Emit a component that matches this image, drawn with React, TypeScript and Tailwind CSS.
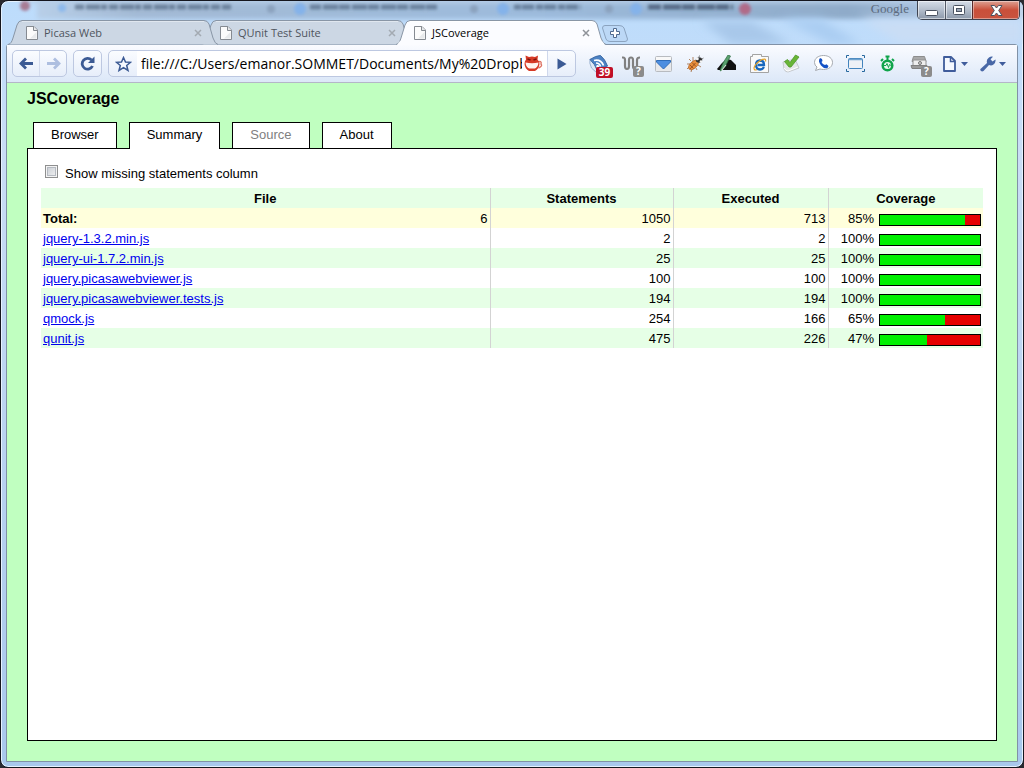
import { useState, type ReactNode } from "react";

type Row = { file: string; statements: number; executed: number; coverage: number };

const rows: Row[] = [
  { file: "jquery-1.3.2.min.js", statements: 2, executed: 2, coverage: 100 },
  { file: "jquery-ui-1.7.2.min.js", statements: 25, executed: 25, coverage: 100 },
  { file: "jquery.picasawebviewer.js", statements: 100, executed: 100, coverage: 100 },
  { file: "jquery.picasawebviewer.tests.js", statements: 194, executed: 194, coverage: 100 },
  { file: "qmock.js", statements: 254, executed: 166, coverage: 65 },
  { file: "qunit.js", statements: 475, executed: 226, coverage: 47 },
];

function PageIcon() {
  return (
    <svg className="h-[14px] w-[12px] shrink-0" viewBox="0 0 12 14" aria-hidden="true">
      <path d="M.5 .5H8L11.5 4V13.5H.5Z" fill="#fbfbfb" stroke="#858a91" />
      <path d="M7.5 .5V4.5H11.5" fill="#e6e8ea" stroke="#858a91" />
      <path d="M4 12.5 10.5 6V12.5Z" fill="#e8eaec" />
    </svg>
  );
}

function BrowserTab({ title, active = false }: { title: string; active?: boolean }) {
  return (
    <div className={active ? "relative z-20 -ml-4 flex h-[25px] w-[210px] items-center pr-[14px] pl-[18px] first:ml-0" : "relative -ml-4 flex h-[25px] w-[210px] items-center pr-[14px] pl-[18px] first:z-10 first:ml-0"}>
      <svg className="absolute inset-0 h-full w-full" viewBox="0 0 210 25" preserveAspectRatio="none" aria-hidden="true">
        <path
          d="M0 24.5C3 24 4 21 5 18L9 5Q10.5 .5 14 .5H196Q199.5 .5 201 4L205 18Q207 24 210 24.5"
          fill={active ? "#fbfcff" : "#ccd7e4"}
          stroke="#8996a6"
        />
        <path d="M14 1.5H196" stroke="#fff" strokeOpacity={active ? 1 : 0.4} />
        {active && <path d="M1 25H209L206 21H4Z" fill="#fbfcff" />}
      </svg>
      <button type="button" className="relative flex min-w-0 flex-1 items-center gap-[6px] text-left">
        <PageIcon />
        <span className={active ? "text-black" : "text-[#4f555e]"}>{title}</span>
      </button>
      <button type="button" aria-label={"Close " + title} className="relative flex h-3 w-3 items-center justify-center">
        <svg className="h-[8px] w-[8px]" viewBox="0 0 8 8" aria-hidden="true">
          <path d="M1 1 7 7M7 1 1 7" stroke={active ? "#8f9399" : "#a3aab2"} strokeWidth="1.5" />
        </svg>
      </button>
    </div>
  );
}

function WindowControls() {
  return (
    <div className="-mr-0.5 flex h-[19px] overflow-hidden rounded-b-[5px] border border-t-0 border-[#3d4350]">
      <button type="button" aria-label="Minimize" className="flex w-7 items-center justify-center border-r border-[#525a67] bg-linear-to-b from-[#d5dde8] via-[#b6c0ce] via-45% to-[#8d99aa] shadow-[inset_0_0_0_1px_#ffffff88]">
        <svg className="mt-[5px] h-[6px] w-[13px]" viewBox="0 0 13 6" aria-hidden="true"><rect x=".5" y=".5" width="12" height="5" rx="1" fill="#fff" stroke="#4b5361" /></svg>
      </button>
      <button type="button" aria-label="Maximize" className="flex w-[26px] items-center justify-center bg-linear-to-b from-[#d5dde8] via-[#b6c0ce] via-45% to-[#8d99aa] shadow-[inset_0_0_0_1px_#ffffff88]">
        <svg className="h-[10px] w-[12px]" viewBox="0 0 12 10" aria-hidden="true">
          <rect x=".5" y=".5" width="11" height="9" rx="1" fill="#fff" stroke="#4b5361" />
          <rect x="3.5" y="3.5" width="5" height="3" fill="#9ca7b7" stroke="#4b5361" />
        </svg>
      </button>
      <button type="button" aria-label="Close window" className="flex w-[47px] items-center justify-center border-l border-[#5b2a2a] bg-linear-to-b from-[#dba093] via-[#c94f3a] via-50% to-[#c8543f] shadow-[inset_0_0_0_1px_#ffffff66]">
        <svg className="h-[11px] w-[13px]" viewBox="0 0 13 11" aria-hidden="true">
          <path d="M1 .5H4.5L6.5 3 8.5 .5H12L8.7 5.5 12 10.5H8.5L6.5 8 4.5 10.5H1L4.3 5.5Z" fill="#fff" stroke="#4b5361" />
        </svg>
      </button>
    </div>
  );
}

function Backdrop() {
  return (
    <svg className="absolute inset-x-0 top-0 h-[43px] w-full rounded-t-[6px]" viewBox="0 0 1022 43" preserveAspectRatio="none" aria-hidden="true">
      <defs>
        <filter id="haze" filterUnits="userSpaceOnUse" x="-20" y="-20" width="1070" height="90"><feGaussianBlur stdDeviation="2.5" /></filter>
        <filter id="smudge" filterUnits="userSpaceOnUse" x="-20" y="-20" width="1070" height="90"><feGaussianBlur stdDeviation="1.8" /></filter>
        <filter id="softHaze" filterUnits="userSpaceOnUse" x="-20" y="-20" width="1070" height="90"><feGaussianBlur stdDeviation="5" /></filter>
        <linearGradient id="band" x1="0" x2="1" y1="0" y2="0">
          <stop offset="0" stopColor="#b8cfe8" /><stop offset=".1" stopColor="#a3bad5" /><stop offset=".5" stopColor="#9dbbdc" />
          <stop offset=".82" stopColor="#8fabc9" /><stop offset=".9" stopColor="#a9c2df" /><stop offset="1" stopColor="#c2d4ea" />
        </linearGradient>
      </defs>
      <g filter="url(#haze)">
        <rect x="36" y="-4" width="990" height="22" fill="url(#band)" />
        <path d="M20 -3H1022V2H20Z" fill="#b8cfe8" />
      </g>
      <g filter="url(#softHaze)">
        <path d="M750 20 790 43H730L700 20Z" fill="#a8c8ea" />
        <path d="M860 18 900 43H1022V18Z" fill="#c9ddf5" />
        <path d="M820 18 860 43H830L780 18Z" fill="#aacdf2" />
      </g>
      <g filter="url(#smudge)" stroke="#465a75" strokeOpacity=".6" strokeWidth="5" fill="none">
        <path d="M74 6H230" strokeDasharray="9 2 14 1 6 2" />
        <path d="M309 6H438" strokeDasharray="11 2 15 1" />
        <path d="M513 6H580" strokeDasharray="7 1 12 2" />
        <path d="M647 6H732" stroke="#26364e" strokeDasharray="13 2 18 1" />
      </g>
      <g filter="url(#smudge)">
        <circle cx="24" cy="5" r="5" fill="#a77b94" /><circle cx="744" cy="8" r="6" fill="#b06a88" />
        <circle cx="61" cy="7" r="4" fill="#8db9ec" /><circle cx="299" cy="8" r="6" fill="#84b2ea" />
        <circle cx="502" cy="8" r="6" fill="#84b2ea" /><circle cx="635" cy="8" r="6" fill="#84b2ea" />
        <circle cx="270" cy="8" r="4" fill="#8ba2be" /><circle cx="473" cy="8" r="4" fill="#8ba2be" /><circle cx="608" cy="8" r="4" fill="#8ba2be" />
      </g>
    </svg>
  );
}

function Tool({ label, children }: { label: string; children: ReactNode }) {
  return (
    <button type="button" aria-label={label} className="flex h-7 w-8 shrink-0 items-center justify-center">
      {children}
    </button>
  );
}

function Badge({ children, red = false }: { children: ReactNode; red?: boolean }) {
  return (
    <span className={red
      ? "absolute -right-[4px] -bottom-[4px] flex h-[11px] w-[17px] items-center justify-center rounded-[2px] bg-[#c00f26] text-[10px] leading-none font-bold text-white"
      : "absolute -right-[4px] -bottom-[4px] flex h-[11px] w-[11px] items-center justify-center rounded-[2px] bg-[#8b8b8b] text-[10px] leading-none font-bold text-white"}>
      {children}
    </span>
  );
}

function Extensions() {
  return (
    <div className="flex items-center pl-[7px]">
      <Tool label="Feed reader, 39 unread">
        <span className="relative flex h-5 w-5">
          <svg className="h-5 w-5" viewBox="0 0 20 20" aria-hidden="true">
            <path d="M1 5Q0 9 2.500 14L8 19 18 14V12Z" fill="#dfe9f6" stroke="#7b9ac2" strokeWidth=".7" />
            <path d="M1 5.500Q7 1.500 11.500 1.500 16 5 18.500 12 13 13 8.500 17 6 10 1 5.500Z" fill="#4c82c4" stroke="#3d6aa5" strokeLinejoin="round" />
            <path d="M5 6.500Q12 5 14.500 11.500M7 9Q10.500 9 11.500 12.500" fill="none" stroke="#fff" strokeWidth="1.7" />
            <circle cx="8.700" cy="12.500" r="1.400" fill="#fff" />
          </svg>
          <Badge red>39</Badge>
        </span>
      </Tool>
      <Tool label="Waveform extension">
        <span className="relative flex h-[18px] w-[18px]">
          <svg className="h-[18px] w-[18px]" viewBox="0 0 18 18" aria-hidden="true">
            <path d="M0 2.500H1Q3 2.500 3 5V11Q3 14 5 14T7 11V5Q7 2.500 9 2.500T11 5V11Q11 14 13 14T15 11V5Q15 2.500 18 2.500" fill="none" stroke="#808080" strokeWidth="2.200" />
          </svg>
          <Badge>?</Badge>
        </span>
      </Tool>
      <Tool label="Download">
        <svg className="h-[16px] w-[17px]" viewBox="0 0 17 16" aria-hidden="true">
          <rect x=".5" y=".5" width="16" height="15" rx="1" fill="#e8e9eb" stroke="#b8bbc0" />
          <rect x="1" y="1" width="15" height="3" fill="#f8f8f8" />
          <path d="M1.500 4.500H15.500V6L8.500 13 1.500 6Z" fill="#4d8ee0" stroke="#2f6cb8" strokeLinejoin="round" />
        </svg>
      </Tool>
      <Tool label="Firebug">
        <svg className="h-[18px] w-[18px]" viewBox="0 0 18 18" aria-hidden="true">
          <path d="M5 6 3 4M4 9H1M7 6 7 2M12 10 15 12M10 13 11 15M6 14 5 17M3 12 1 14" stroke="#a0683c" strokeWidth=".8" />
          <ellipse cx="7.500" cy="10" rx="6" ry="3.400" transform="rotate(-42 7.500 10)" fill="#e98f3c" stroke="#b5672a" strokeWidth=".7" />
          <path d="M4 10 7.500 13.500M6 7.500 10 11.500M4 14 9.500 8" stroke="#8d461a" strokeWidth=".8" />
          <ellipse cx="13" cy="5" rx="3.200" ry="2.800" fill="#333" />
          <circle cx="11.300" cy="3.800" r="1.500" fill="#f4f4f4" /><circle cx="15" cy="6.500" r="1.300" fill="#f4f4f4" />
          <path d="M13 2 13.500 .5M16 4 17.500 3" stroke="#666" strokeWidth=".8" />
        </svg>
      </Tool>
      <Tool label="Sign">
        <svg className="h-[17px] w-[20px]" viewBox="0 0 20 17" aria-hidden="true">
          <path d="M0 14 5 8 10 4 14 5 19 10V15H1Z" fill="#111" />
          <path d="M11 0 13.500 1 9 10 4 16 3 15.500 6 8Z" fill="#5aa06e" stroke="#2d6b3f" strokeWidth=".7" />
          <path d="M9 10 4.500 15.500" stroke="#dcebdf" strokeWidth="1.100" />
        </svg>
      </Tool>
      <Tool label="IE Tab">
        <svg className="h-[19px] w-[19px]" viewBox="0 0 19 19" aria-hidden="true">
          <path d="M.5 2.500H2.500V.5H11.500V2.500H18.500V18.500H.5Z" fill="#fafafa" stroke="#a3a3a3" />
          <path d="M14 13Q12.500 15.500 10 15.500 6 15.300 6 11T10 6.500Q14 6.500 14 11H7.500" fill="none" stroke="#1767bd" strokeWidth="2.300" />
          <path d="M15.500 7.500Q16.500 3.500 11 6 5 10 4 14 4 17 7 15.500" fill="none" stroke="#e5a52e" strokeWidth="1.200" />
        </svg>
      </Tool>
      <Tool label="Check">
        <svg className="h-[19px] w-[18px]" viewBox="0 0 18 19" aria-hidden="true">
          <path d="M1 8 13 5 17 14 6 18Q3 18 2 15Z" fill="#e4e7e9" stroke="#c5c9cd" />
          <path d="M2 14Q4 17 6 17L16 13" fill="none" stroke="#fff" />
          <path d="M2.500 7.500 5.500 5.500 8 8.500 13.500 1 17 3 9 13H7Z" fill="#69b536" stroke="#4d972a" strokeWidth=".8" />
        </svg>
      </Tool>
      <Tool label="Call">
        <svg className="h-[17px] w-[19px]" viewBox="0 0 19 17" aria-hidden="true">
          <path d="M9.500 .5C15 .5 18.500 3.500 18.500 7.500S15 14.500 9.500 14.500Q7.500 14.500 6 14L1.500 15.500 3 12Q.5 10.500 .5 7.500C.5 3.500 4 .5 9.500 .5Z" fill="#fff" stroke="#a5a9af" />
          <path d="M6 3 8 4 8.500 6 7.500 7Q8.500 9.500 11 10L12.500 9.300 14.500 11 13.500 13Q10 14 7 10.500 3.500 6 6 3Z" fill="#1452c6" />
        </svg>
      </Tool>
      <Tool label="Capture window">
        <svg className="h-[17px] w-[19px]" viewBox="0 0 19 17" aria-hidden="true">
          <path d="M.5 3V.5H3M16 .5H18.500V3M18.500 14V16.500H16M3 16.500H.5V14" fill="none" stroke="#27689e" />
          <rect x="2.500" y="3.500" width="14" height="10" rx="1" fill="#edf1f6" stroke="#4384bd" />
          <path d="M3 4.500H16" stroke="#6fa3cf" strokeWidth="1.500" />
        </svg>
      </Tool>
      <Tool label="Speed tracer">
        <svg className="h-[17px] w-[15px]" viewBox="0 0 15 17" aria-hidden="true">
          <circle cx="7.500" cy="10.500" r="4.800" fill="#e8f8ee" stroke="#0fa44a" strokeWidth="2.500" />
          <path d="M5.500 1.500H9.500M7.500 2V5M12 4 14 6M3 4 1 6" stroke="#0fa44a" strokeWidth="2" />
          <path d="M4 10.500H6L7 8.500 8.500 12.500 9.500 9.500 11 10.500" fill="none" stroke="#0fa44a" />
        </svg>
      </Tool>
      <Tool label="Cash register">
        <span className="relative flex h-[18px] w-[18px]">
          <svg className="h-[18px] w-[18px]" viewBox="0 0 18 18" aria-hidden="true">
            <path d="M3.500 1.500H14.500L16 6.500H2Z" fill="#a9a9a9" stroke="#8d8d8d" />
            <rect x="3" y="5" width="13" height="6" rx="1" fill="#eee" stroke="#909090" />
            <path d="M1 10.500H17V13.500H2Z" fill="#9a9a9a" stroke="#808080" />
            <circle cx="10" cy="8" r="1.500" fill="#ccc" stroke="#777" />
          </svg>
          <Badge>?</Badge>
        </span>
      </Tool>
    </div>
  );
}

const round = "flex h-[27px] items-center rounded-[5px] border border-[#bdc8e1] bg-linear-to-b from-[#fafcff] to-[#e7eefa]";

function Toolbar() {
  return (
    <div className="flex h-[38px] items-center border-b border-[#b4b6c8] bg-linear-to-b from-[#fafbff] to-[#dce8f8] pr-[6px] pl-[5px]">
      <div className={round + " w-[55px] shrink-0"}>
        <button type="button" aria-label="Back" className="flex h-full flex-1 items-center justify-center border-r border-[#d3dbed]">
          <svg className="h-[13px] w-[15px]" viewBox="0 0 15 13" aria-hidden="true"><path d="M14 6.500H2.500M7 1.500 2 6.500 7 11.500" fill="none" stroke="#3b5a94" strokeWidth="2.800" /></svg>
        </button>
        <button type="button" aria-label="Forward" className="flex h-full flex-1 items-center justify-center">
          <svg className="h-[13px] w-[15px]" viewBox="0 0 15 13" aria-hidden="true"><path d="M1 6.500H12.500M8 1.500 13 6.500 8 11.500" fill="none" stroke="#aebfe0" strokeWidth="2.800" /></svg>
        </button>
      </div>
      <button type="button" aria-label="Reload" className={round + " ml-[6px] w-[29px] shrink-0 justify-center"}>
        <svg className="h-[15px] w-[15px]" viewBox="0 0 15 15" aria-hidden="true">
          <path d="M11.500 4A5.400 5.400 0 1 0 12.500 10" fill="none" stroke="#3b5a94" strokeWidth="2.800" />
          <path d="M14.500 .5V7H8Z" fill="#3b5a94" />
        </svg>
      </button>
      <div className={round + " ml-[6px] min-w-0 flex-1 overflow-hidden"}>
        <button type="button" aria-label="Bookmark this page" className="flex w-7 shrink-0 items-center justify-center">
          <svg className="h-[16px] w-[17px]" viewBox="0 0 17 16" aria-hidden="true"><path d="M8.500 1.500 10.500 6 15.500 6.300 11.700 9.500 13 14.500 8.500 11.700 4 14.500 5.300 9.500 1.500 6.300 6.500 6Z" fill="#f4f8ff" stroke="#3b5a94" strokeWidth="1.500" /></svg>
        </button>
        <div className="flex h-full min-w-0 flex-1 items-center bg-white px-1">
          <input
            aria-label="Address"
            defaultValue="file:///C:/Users/emanor.SOMMET/Documents/My%20Dropbox"
            className="h-full min-w-0 flex-1 bg-transparent text-[14px] text-black outline-none"
          />
          <svg className="ml-[2px] h-[17px] w-[19px] shrink-0" viewBox="0 0 19 17" aria-hidden="true">
            <path d="M14 7Q18 5.500 17 9 19 11 14.500 13" fill="none" stroke="#dd7263" strokeWidth="1.400" />
            <path d="M2 4.500 1.500 .5 5 2Q8 1 11 2L14 .5 13.500 4.500Q15.500 6 15.500 9 15 14 11 16H5Q1 14 .5 9 .5 6 2 4.500Z" fill="#d63a26" />
            <path d="M3.500 4 6.500 5M12.500 4 9.500 5" stroke="#7a130c" strokeWidth="1.500" />
            <path d="M1.500 7.500Q8 9 14.500 7.500 14 12 11 13.500H5Q2 12 1.500 7.500Z" fill="#fff4ee" />
          </svg>
        </div>
        <button type="button" aria-label="Go" className="flex h-full w-7 shrink-0 items-center justify-center border-l border-[#cfd8ec]">
          <svg className="h-[12px] w-[10px]" viewBox="0 0 10 12" aria-hidden="true"><path d="M.5 .5 9.500 6 .5 11.500Z" fill="#3b5a94" /></svg>
        </button>
      </div>
      <Extensions />
      <button type="button" aria-label="Page menu" className="flex h-7 w-10 shrink-0 items-center justify-center gap-[5px]">
        <svg className="h-[16px] w-[13px]" viewBox="0 0 13 16" aria-hidden="true">
          <path d="M1 1H8L12 5V15H1Z" fill="#f5f9ff" stroke="#3f5c9b" strokeWidth="1.800" strokeLinejoin="round" /><path d="M7.500 1V5.500H12" fill="none" stroke="#3f5c9b" strokeWidth="1.500" />
        </svg>
        <svg className="h-[4px] w-[7px]" viewBox="0 0 7 4" aria-hidden="true"><path d="M0 0H7L3.500 4Z" fill="#3f5c9b" /></svg>
      </button>
      <button type="button" aria-label="Tools menu" className="flex h-7 w-9 shrink-0 items-center justify-center gap-[3px]">
        <svg className="h-[16px] w-[16px]" viewBox="0 0 16 16" aria-hidden="true">
          <path d="M1 12.500 7 7Q6 3.500 9 1.500 11 0 13 .7L10.500 3.300 12.500 5.500 15.500 3.500Q16 6.500 13.500 8.500 11.500 10 9 9L3.500 15Q2 16 .8 14.800T1 12.500Z" fill="#4867a6" />
        </svg>
        <svg className="h-[4px] w-[7px]" viewBox="0 0 7 4" aria-hidden="true"><path d="M0 0H7L3.500 4Z" fill="#3f5c9b" /></svg>
      </button>
    </div>
  );
}

function CoverageCell({ value }: { value: number }) {
  return (
    <td className="p-0 pr-[2px]">
      <div className="flex h-5 justify-end gap-[5px]">
        <span className="pt-[2px]">{value}%</span>
        <div className="mt-[6px] flex h-3 w-[102px] border border-black bg-[#e60000]">
          <div className="bg-[#00f000]" style={{ width: `${value}%` }} />
        </div>
      </div>
    </td>
  );
}

const cell = "border-r border-[#d3d3d3] px-[2px] pt-[2px] pb-0";

function SummaryTable() {
  return (
    <table className="w-full table-fixed border-collapse leading-[18px]">
      <colgroup>
        <col />
        <col className="w-[183px]" />
        <col className="w-[155px]" />
        <col className="w-[155px]" />
      </colgroup>
      <thead>
        <tr className="h-5 bg-[#e6ffe6]">
          <th scope="col" className={cell}>File</th>
          <th scope="col" className={cell}>Statements</th>
          <th scope="col" className={cell}>Executed</th>
          <th scope="col" className="px-0 pt-[2px] pb-0">Coverage</th>
        </tr>
      </thead>
      <tbody>
        <tr className="h-5 bg-[#ffffdc] text-right">
          <td className={cell}>
            <div className="flex justify-between"><b>Total:</b><span>6</span></div>
          </td>
          <td className={cell}>1050</td>
          <td className={cell}>713</td>
          <CoverageCell value={85} />
        </tr>
        {rows.map((row) => (
          <tr key={row.file} className="h-5 text-right even:bg-white odd:bg-[#e6ffe6]">
            <td className={cell + " text-left"}>
              <a href="#source" className="text-[#0000ee] underline">{row.file}</a>
            </td>
            <td className={cell}>{row.statements}</td>
            <td className={cell}>{row.executed}</td>
            <CoverageCell value={row.coverage} />
          </tr>
        ))}
      </tbody>
    </table>
  );
}

const pageTabs = ["Browser", "Summary", "Source", "About"];

export default function App() {
  const [current, setCurrent] = useState("Summary");
  const [missing, setMissing] = useState(false);

  return (
    <div className="min-h-screen bg-[#2a2a30] font-['Open_Sans','Noto_Sans',sans-serif]">
      <div className="relative flex min-h-screen flex-col rounded-[8px] border border-[#15161e] bg-linear-to-b from-[#bcdcfc] via-[#c9ddf5] via-20% to-[#a8c8ec] px-[5px] pb-[5px] shadow-[inset_0_0_0_1px_#e6f2ff]">
        <Backdrop />
        <header className="relative z-10 flex h-[43px] justify-between">
          <div className="-mb-px ml-[2px] flex items-end self-end text-[11px] leading-4">
            <BrowserTab title="Picasa Web" />
            <BrowserTab title="QUnit Test Suite" />
            <BrowserTab title="JSCoverage" active />
            <button type="button" aria-label="New tab" className="-ml-1 mb-[3px] flex h-[17px] w-[26px]">
              <svg className="h-[17px] w-[26px]" viewBox="0 0 26 17" aria-hidden="true">
                <path d="M3 .5H17Q21 .5 22 3L25.500 14Q25.500 16.500 23 16.500H8Q5 16.500 4 14L.5 3Q.5 .5 3 .5Z" fill="#bcd8f6" stroke="#8ba3bf" />
                <path d="M11.500 3.500H14.500V6.500H17.500V9.500H14.500V12.500H11.500V9.500H8.500V6.500H11.500Z" fill="#fff" stroke="#506a8e" />
              </svg>
            </button>
          </div>
          <div className="flex items-start self-start">
            <span className="pr-[8px] font-['Liberation_Serif',serif] text-[13px] leading-4 text-[#5d6b7e]">Google</span>
            <WindowControls />
          </div>
        </header>
        <div className="flex flex-1 flex-col rounded-t-[3px] border border-[#8191a6] bg-[#c0ffc0]">
          <Toolbar />
          <main className="flex flex-1 flex-col px-5 pb-5 font-['Liberation_Sans',Arial,sans-serif] text-[13px] text-black">
            <h1 className="pt-[6px] text-[16px] leading-5 font-bold">JSCoverage</h1>
            <div role="tablist" className="z-10 mt-[13px] -mb-px flex items-start gap-3 pl-[6px]">
              {pageTabs.map((name) => (
                <button
                  key={name}
                  type="button"
                  role="tab"
                  aria-selected={name === current}
                  disabled={name === "Source"}
                  onClick={() => setCurrent(name)}
                  className={
                    name === current
                      ? "h-[27px] border border-b-0 border-black bg-white px-[17px] pb-[2px] text-black"
                      : "h-[27px] border border-black bg-white px-[17px] pb-[2px] text-black disabled:text-[#808080]"
                  }
                >
                  {name}
                </button>
              ))}
            </div>
            <section className="flex-1 border border-black bg-white px-[13px] pt-4">
              <label className="flex h-[23px] items-start gap-[7px] pl-1 leading-[18px]">
                <input
                  type="checkbox"
                  checked={missing}
                  onChange={(e) => setMissing(e.target.checked)}
                  className="h-[13px] w-[13px] appearance-none border border-[#8e8f8f] bg-linear-to-br from-[#c5cad1] to-[#f4f4f4] shadow-[inset_0_0_0_1px_#f4f4f4,inset_0_0_0_2px_#b5bac1] checked:bg-[#4b6a9b]"
                />
                Show missing statements column
              </label>
              <SummaryTable />
            </section>
          </main>
        </div>
      </div>
    </div>
  );
}
